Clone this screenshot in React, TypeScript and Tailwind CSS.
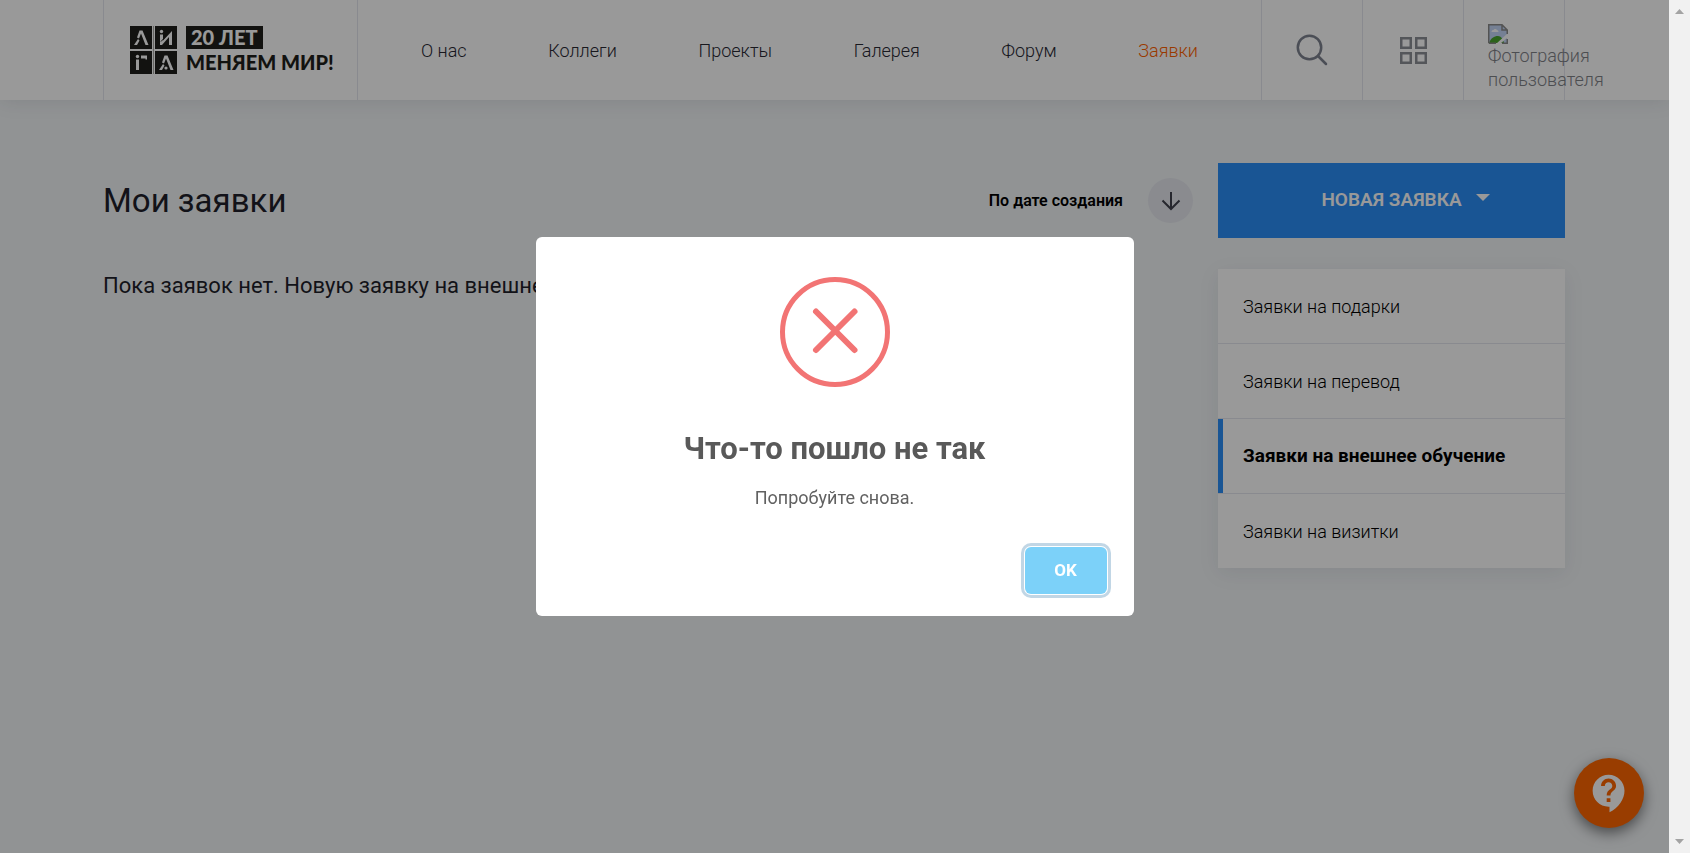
import React from "react";
import { MdContactSupport } from "react-icons/md";

const navItems = ["О нас", "Коллеги", "Проекты", "Галерея", "Форум", "Заявки"];
const categories = [
  "Заявки на подарки",
  "Заявки на перевод",
  "Заявки на внешнее обучение",
  "Заявки на визитки",
];

function Logo() {
  return (
    <a href="#" aria-label="Лига — 20 лет меняем мир!" className="flex items-center gap-[9px]">
      <svg width="47" height="48" viewBox="0 0 47 48" aria-hidden="true" className="shrink-0">
        <g fill="#1f1f1b">
          <rect width="22" height="23" />
          <rect x="25" width="22" height="23" />
          <rect y="25" width="22" height="23" />
          <rect x="25" y="25" width="22" height="23" />
        </g>
        <rect x="23" width="1" height="48" fill="#a8a8a4" />
        <g fill="#fff">
          <path d="M9.500 4.500h3l6 14.500h-3l-4.500-11.500-2 5-2-1z" />
          <path d="M8 13l1.500 1.500-2.500 4.500h-3z" />
          <circle cx="31.500" cy="5.500" r="1.700" />
          <path d="M30 8.500h3v6l9-9.500v14h-3v-8l-7 8h-2z" fillRule="evenodd" />
          <circle cx="7.500" cy="30.500" r="1.700" />
          <path d="M6 33.500h3v10.500h-3z" />
          <path d="M11 29.500h6v4h-1.500v-1h-4.500z" />
          <path d="M34.500 29.500h3l6 14.500h-3l-4.500-11.500-2 5-2-1z" />
          <path d="M33 38l1.500 1.500-2.500 4.500h-3z" />
          <circle cx="36" cy="42" r="1.600" />
        </g>
        <path d="M31 15.500l8-8.500" stroke="#1f1f1b" strokeWidth="1" />
      </svg>
      <span className="flex flex-col items-start gap-[2px] font-[Lato] text-[20px] leading-[23px] font-black whitespace-nowrap text-[#1f1f1b]">
        <span className="bg-[#1f1f1b] px-[5px] text-white">20 ЛЕТ</span>
        <span>МЕНЯЕМ МИР!</span>
      </span>
    </a>
  );
}

function BrokenImage() {
  return (
    <svg width="20" height="20" viewBox="0 0 20 20" aria-hidden="true">
      <path d="M1 1h13l5 5v13H1z" fill="#c3d5f7" />
      <path d="M3.500 8c0-1.500 1-2 2-2 .5-1.500 3-1.500 3.500 0 1 0 1.500 1 1.500 2z" fill="#fff" />
      <path d="M1 19c2-5 5-7 9-7 3 0 5 3 6 7z" fill="#4aa52c" />
      <path d="M8 20L20 9v4l-8 7z" fill="#fff" />
      <path d="M.75 19.250V.75H14l5.250 5.250v4M14 1v5h5M1 19.250h7M14 19.250h5.250V15" fill="none" stroke="#8a8a8a" strokeWidth="1.500" />
    </svg>
  );
}

function Header() {
  return (
    <header className="relative bg-white pr-[104px] pl-[103px] shadow-[0_0_20px_rgba(30,40,60,0.12)]">
      <div className="flex h-[100px] border-x border-[#e4e7ee]">
        <div className="flex w-[254px] shrink-0 items-center border-r border-[#e4e7ee] pl-[26px]">
          <Logo />
        </div>
        <nav className="flex grow items-center justify-between px-[63px] text-[18px] font-light text-[#282833]">
          {navItems.map((item) => (
            <a key={item} href="#" className={item === "Заявки" ? "text-[#ff6200]" : ""}>
              {item}
            </a>
          ))}
        </nav>
        <button aria-label="Поиск" className="flex w-[101px] shrink-0 items-center justify-center border-l border-[#e4e7ee]">
          <svg width="32" height="32" viewBox="0 0 32 32" fill="none" stroke="#7d828f" strokeWidth="2.500" strokeLinecap="round" aria-hidden="true">
            <circle cx="13.500" cy="13.500" r="11.700" />
            <path d="M22 22l8 8" />
          </svg>
        </button>
        <button aria-label="Приложения" className="flex w-[101px] shrink-0 items-center justify-center border-l border-[#e4e7ee]">
          <svg width="27" height="27" viewBox="0 0 27 27" fill="none" stroke="#8d9097" strokeWidth="2.500" aria-hidden="true">
            <rect x="1.250" y="1.250" width="9.500" height="9.500" />
            <rect x="16.250" y="1.250" width="9.500" height="9.500" />
            <rect x="1.250" y="16.250" width="9.500" height="9.500" />
            <rect x="16.250" y="16.250" width="9.500" height="9.500" />
          </svg>
        </button>
        <a href="#" className="w-[101px] shrink-0 border-l border-[#e4e7ee] pt-[24px] pl-[24px] text-[18px] leading-[24px] font-light text-[#7f8288]">
          <BrokenImage />
          Фотография пользователя
        </a>
      </div>
    </header>
  );
}

function Sidebar() {
  return (
    <aside className="w-[347px] shrink-0">
      <button className="flex h-[75px] w-full items-center justify-center gap-[14px] bg-[#2b8ef7] pl-[28px] text-[19px] font-semibold text-white">
        НОВАЯ ЗАЯВКА
        <svg width="14" height="14" viewBox="0 0 14 14" fill="currentColor" aria-hidden="true">
          <path d="M0 0h14L7 7z" />
        </svg>
      </button>
      <ul className="mt-[31px] divide-y divide-[#e4e7ee] bg-white shadow-[0_5px_20px_rgba(30,40,60,0.08)]">
        {categories.map((item) => (
          <li key={item}>
            <a
              href="#"
              className={
                item === "Заявки на внешнее обучение"
                  ? "flex h-[74px] items-center border-l-[5px] border-[#2b8ef7] pl-[20px] text-[19px] font-bold text-black"
                  : "flex h-[74px] items-center pl-[25px] text-[18px] font-light text-black"
              }
            >
              {item}
            </a>
          </li>
        ))}
      </ul>
    </aside>
  );
}

function ErrorDialog() {
  return (
    <div className="fixed inset-y-0 right-[21px] left-0 flex items-center justify-center bg-black/40">
      <div role="alertdialog" aria-labelledby="dialog-title" aria-describedby="dialog-text" className="flex w-[598px] flex-col items-center rounded-[6px] bg-white">
        <svg width="110" height="110" viewBox="0 0 110 110" fill="none" stroke="#f27474" aria-hidden="true" className="mt-[40px]">
          <circle cx="55" cy="55" r="52.500" strokeWidth="5" />
          <path d="M36 34.500l38.500 38.500M74.500 34.500l-38.500 38.500" strokeWidth="6" strokeLinecap="round" />
        </svg>
        <h2 id="dialog-title" className="mt-[42px] text-[31px] leading-[40px] font-bold text-[#595959]">
          Что-то пошло не так
        </h2>
        <p id="dialog-text" className="mt-[17px] text-[18px] leading-[24px] text-[#616161]">
          Попробуйте снова.
        </p>
        <div className="flex w-full justify-end px-[27px] pt-[37px] pb-[22px]">
          <button className="h-[47px] w-[82px] rounded-[6px] bg-[#7cd1f9] text-[17px] font-bold text-white shadow-[0_0_0_1px_#fff,0_0_0_4px_rgba(43,114,165,0.29)]">
            OK
          </button>
        </div>
      </div>
    </div>
  );
}

function ScrollTrack() {
  return (
    <div aria-hidden="true" className="fixed inset-y-0 right-0 flex w-[21px] flex-col items-center justify-between bg-[#f1f1f1] pt-[9px] pb-[9px]">
      <svg width="9" height="5" viewBox="0 0 9 5" fill="#a3a3a3">
        <path d="M0 5L4.500 0 9 5z" />
      </svg>
      <svg width="9" height="5" viewBox="0 0 9 5" fill="#a3a3a3">
        <path d="M0 0h9L4.500 5z" />
      </svg>
    </div>
  );
}

export default function App() {
  return (
    <div className="min-h-screen bg-[#f2f5f7] pr-[21px] font-[Roboto,sans-serif]">
      <Header />
      <main className="flex gap-[25px] pt-[63px] pr-[104px] pl-[103px]">
        <section className="grow">
          <div className="flex h-[75px] items-center justify-between">
            <h1 className="text-[33px] text-[#1e1e2a]">Мои заявки</h1>
            <div className="flex items-center gap-[25px]">
              <span className="text-[16px] font-semibold text-black">По дате создания</span>
              <button aria-label="Изменить порядок" className="flex size-[45px] items-center justify-center rounded-full bg-[#e6e8ef]">
                <svg width="20" height="20" viewBox="0 0 20 20" fill="none" stroke="#40424d" strokeWidth="2" aria-hidden="true">
                  <path d="M10 1v17M1.500 9.500L10 18l8.500-8.500" />
                </svg>
              </button>
            </div>
          </div>
          <p className="mt-[30px] text-[22px] leading-[36px] text-[#1e1e2a]">
            Пока заявок нет. Новую заявку на внешнее обучение можно создать здесь.
          </p>
        </section>
        <Sidebar />
      </main>
      <button aria-label="Помощь" className="fixed right-[46px] bottom-[25px] flex size-[70px] items-center justify-center rounded-full bg-[#ff6600] text-white shadow-[0_5px_14px_rgba(0,0,0,0.5)]">
        <MdContactSupport size={45} />
      </button>
      <ErrorDialog />
      <ScrollTrack />
    </div>
  );
}
